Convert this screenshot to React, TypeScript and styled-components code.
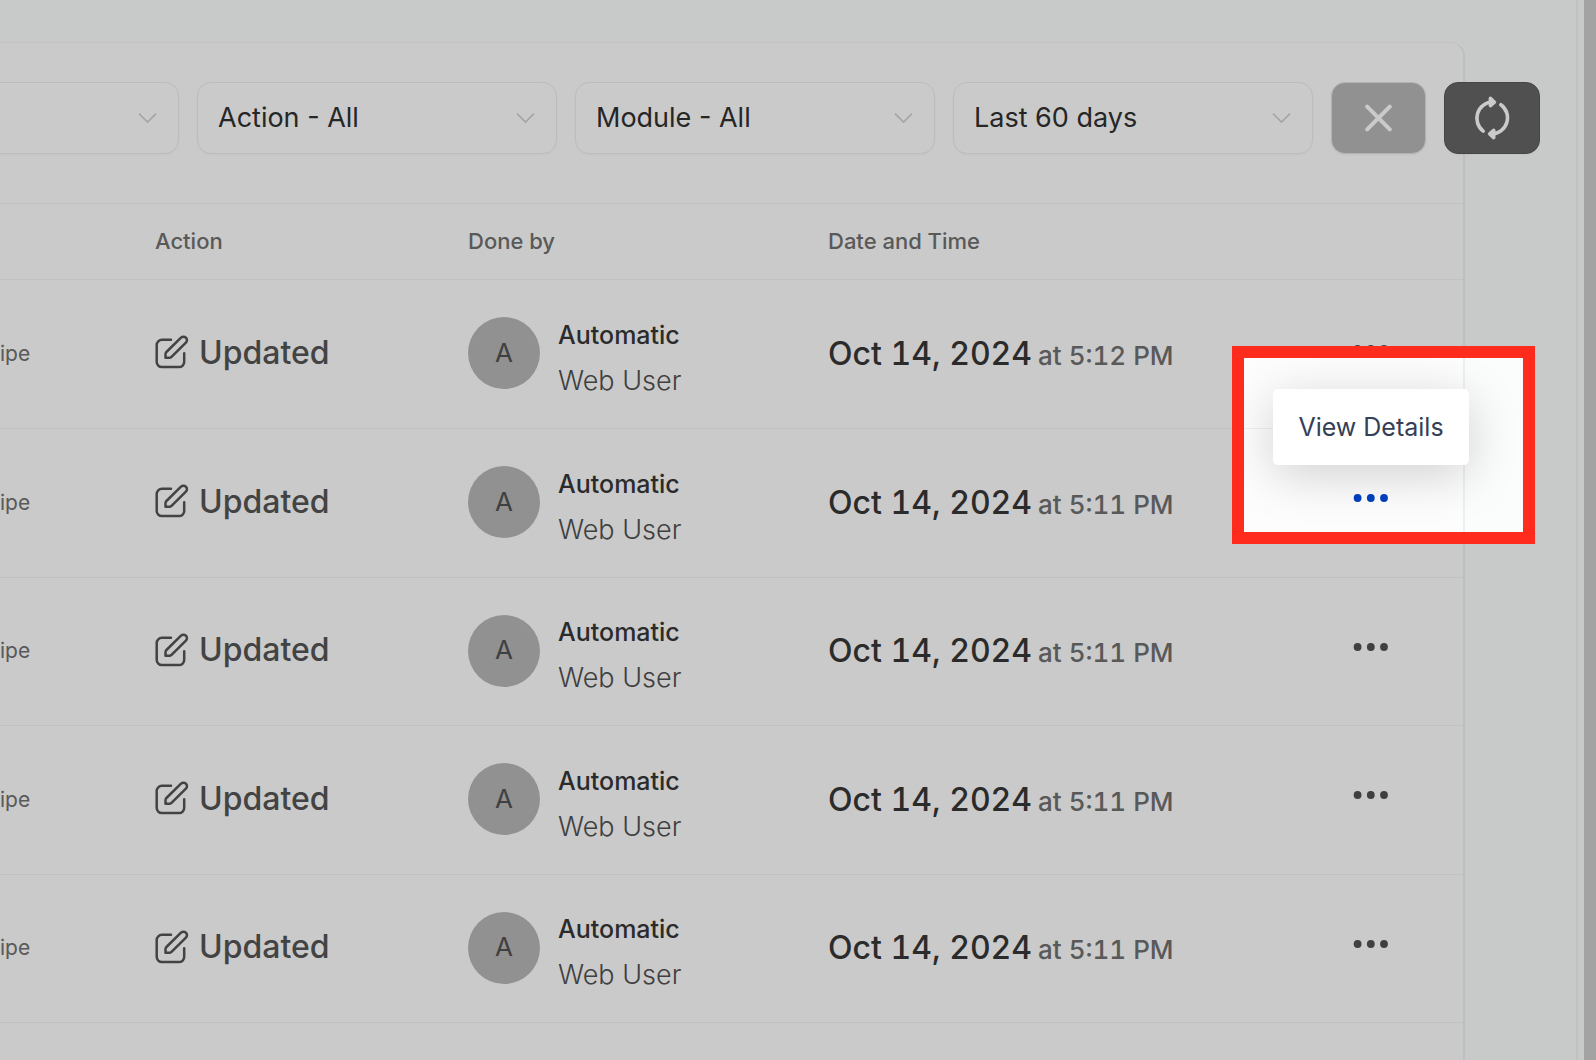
import React from "react";
import styled, { createGlobalStyle } from "styled-components";

const GlobalStyle = createGlobalStyle`
  *, *::before, *::after { box-sizing: border-box; }
  body {
    margin: 0;
    font-family: Inter, "Liberation Sans", sans-serif;
    background: #fcfcfc;
  }
  button, select { font: inherit; }
`;

const Page = styled.div`
  display: flex;
  position: relative;
  min-height: 100vh;
  overflow: hidden;
  background: #fbfcfc;
`;

const Main = styled.main`
  flex: 1;
  min-width: 0;
  display: flex;
  padding: 42px 111px 0 0;
`;

const Gutter = styled.div`
  width: 8px;
  border-left: 2px solid #f2f2f2;
`;

const ScrollTrack = styled.div`
  width: 12px;
  background: #cccccc;
`;

const Card = styled.section`
  flex: 1;
  min-width: 0;
  border-top: 1px solid #f3f3f3;
  border-right: 2px solid #eeeff1;
  border-top-right-radius: 14px;
  background: #fdfdfd;
`;

const Toolbar = styled.div`
  display: flex;
  gap: 18px;
  margin: 39px -77px 49px -181px;
`;

const SelectBox = styled.label`
  flex: 1 1 0;
  min-width: 0;
  display: grid;
  align-items: center;
  color: #303030;
`;

const Select = styled.select`
  grid-area: 1 / 1;
  appearance: none;
  width: 100%;
  height: 72px;
  padding: 0 60px 2px 20px;
  border: 1px solid #ececec;
  border-radius: 14px;
  background: #fdfdfd;
  box-shadow: 0 1px 2px rgba(0, 0, 0, 0.03);
  color: inherit;
  font-size: 27px;
`;

const Chevron = styled.svg`
  grid-area: 1 / 1;
  justify-self: end;
  margin-right: 22px;
  pointer-events: none;
`;

const ToolButton = styled.button<{ $dark?: boolean }>`
  flex: none;
  display: flex;
  align-items: center;
  justify-content: center;
  width: ${(p) => (p.$dark ? 96 : 95)}px;
  height: 72px;
  padding: 0;
  border: 1px solid ${(p) => (p.$dark ? "#585858" : "#e0e0e0")};
  border-radius: 14px;
  background: ${(p) => (p.$dark ? "#646464" : "#b6b6b6")};
  color: #fdfdfd;
  box-shadow: 0 1px 2px rgba(0, 0, 0, 0.04);
`;

const Table = styled.table`
  width: 100%;
  table-layout: fixed;
  border-collapse: separate;
  border-spacing: 0;
`;

const HeadCell = styled.th<{ $width?: number }>`
  width: ${(p) => (p.$width ? `${p.$width}px` : "auto")};
  height: 77px;
  padding: 0 0 2px;
  border-top: 1px solid #f3f3f3;
  border-bottom: 1px solid #f3f3f3;
  text-align: left;
  font-size: 22px;
  font-weight: 500;
  color: #707070;
`;

const Row = styled.tr`
  height: 149px;
  &:nth-child(3n), &:nth-child(5n) { height: 148px; }
`;

const Cell = styled.td<{ $center?: boolean }>`
  position: relative;
  padding: 0 0 2px;
  border-bottom: 1px solid #f0f0f0;
  text-align: ${(p) => (p.$center ? "center" : "left")};
  white-space: nowrap;
`;

const ModuleText = styled.span`
  font-size: 21px;
  color: #707070;
`;

const ActionLabel = styled.div`
  display: flex;
  align-items: center;
  gap: 10px;
  padding-bottom: 2px;
  font-size: 32px;
  font-weight: 500;
  color: #545454;
`;

const Person = styled.div`
  display: flex;
  align-items: center;
  gap: 18px;
`;

const Avatar = styled.span`
  display: flex;
  align-items: center;
  justify-content: center;
  width: 72px;
  height: 72px;
  padding-bottom: 2px;
  border-radius: 50%;
  background: #b6b6b6;
  color: #505050;
  font-size: 26px;
`;

const PersonText = styled.div`
  display: flex;
  flex-direction: column;
  padding-top: 9px;
  line-height: 45px;
`;

const PersonName = styled.span`
  font-size: 25px;
  font-weight: 500;
  color: #363636;
`;

const PersonRole = styled.span`
  font-size: 27px;
  font-weight: 300;
  color: #505050;
`;

const Timestamp = styled.div`
  display: flex;
  align-items: baseline;
  gap: 6px;
  font-variant-numeric: tabular-nums;
`;

const DateText = styled.span`
  font-size: 32px;
  font-weight: 500;
  color: #363636;
`;

const TimeText = styled.span`
  font-size: 26px;
  font-weight: 500;
  color: #707070;
`;

const MoreButton = styled.button<{ $active: boolean }>`
  display: inline-flex;
  align-items: center;
  justify-content: center;
  width: 60px;
  height: 40px;
  margin-bottom: 8px;
  padding: 0;
  border: 0;
  background: none;
  vertical-align: middle;
  color: ${(p) => (p.$active ? "#0040c0" : "#505050")};
`;

const Spotlight = styled.div`
  position: absolute;
  z-index: 2;
  top: -83px;
  left: -46px;
  width: 303px;
  height: 198px;
  padding: 31px 29px;
  border: 12px solid #ff2b1c;
  box-shadow: 0 0 0 3000px rgba(0, 0, 0, 0.2);
  overflow: hidden;
  pointer-events: none;
`;

const MenuItem = styled.button`
  display: block;
  width: 196px;
  height: 76px;
  padding: 0;
  border: 0;
  border-radius: 5px;
  background: #ffffff;
  box-shadow: 0 10px 50px rgba(0, 0, 0, 0.18);
  color: #344056;
  font-size: 25px;
  pointer-events: auto;
`;

const ChevronIcon = () => (
  <Chevron width="19" height="12" viewBox="0 0 19 12" fill="none" stroke="#cfcfcf" strokeWidth="1.7" strokeLinecap="round" aria-hidden="true">
    <path d="M1.5 2.2l8 7.8 8-7.8" />
  </Chevron>
);

const CloseIcon = () => (
  <svg width="28" height="28" viewBox="0 0 28 28" fill="none" stroke="currentColor" strokeWidth="4" strokeLinecap="round" aria-hidden="true">
    <path d="M2.2 2.7l22.6 22.6M24.8 2.7L2.2 25.3" />
  </svg>
);

const RefreshIcon = () => (
  <svg width="36" height="44" viewBox="0 0 36 44" fill="none" stroke="currentColor" strokeWidth="3.6" strokeLinecap="round" strokeLinejoin="round" aria-hidden="true">
    <path d="M9.2 35.1A16 16.2 0 0 1 18.2 6" />
    <path d="M26.9 8.7A16 16.2 0 0 1 18 38" />
    <path d="M16.4 2.4L20.4 6.2 16.4 9.6z" fill="currentColor" />
    <path d="M19.7 34.4L15.7 37.9 19.7 41.6z" fill="currentColor" />
  </svg>
);

const EditIcon = () => (
  <svg width="34" height="34" viewBox="0 0 34 34" fill="none" stroke="currentColor" strokeWidth="2.5" strokeLinecap="round" strokeLinejoin="round" aria-hidden="true">
    <path d="M16 4.8H7A5.2 5.2 0 0 0 1.7 10v16.8A5.2 5.2 0 0 0 7 32.1h17a5.2 5.2 0 0 0 5.2-5.3v-8.6" />
    <path d="M10.5 22.8v-3.6c0-.9.3-1.6.9-2.2L26 2.7a3.4 3.4 0 0 1 4.9 0 3.4 3.4 0 0 1 0 4.9L16.5 21.8c-.6.6-1.4 1-2.3 1z" />
  </svg>
);

const DotsIcon = () => (
  <svg width="36" height="10" viewBox="0 0 36 10" fill="currentColor" aria-hidden="true">
    <circle cx="4.6" cy="5" r="3.9" />
    <circle cx="17.8" cy="5" r="3.9" />
    <circle cx="31" cy="5" r="3.9" />
  </svg>
);

const filters = [
  { label: "User", value: "" },
  { label: "Action", value: "Action - All" },
  { label: "Module", value: "Module - All" },
  { label: "Period", value: "Last 60 days" },
];

const entries = [
  { id: 1, time: "5:12 PM" },
  { id: 2, time: "5:11 PM", open: true },
  { id: 3, time: "5:11 PM" },
  { id: 4, time: "5:11 PM" },
  { id: 5, time: "5:11 PM" },
];

export default function App() {
  return (
    <>
      <GlobalStyle />
      <Page>
        <Main>
          <Card>
            <Toolbar>
              {filters.map((f) => (
                <SelectBox key={f.label}>
                  <Select aria-label={f.label} defaultValue={f.value}>
                    <option value={f.value}>{f.value}</option>
                  </Select>
                  <ChevronIcon />
                </SelectBox>
              ))}
              <ToolButton type="button" aria-label="Clear filters">
                <CloseIcon />
              </ToolButton>
              <ToolButton type="button" aria-label="Refresh" $dark>
                <RefreshIcon />
              </ToolButton>
            </Toolbar>
            <Table>
              <thead>
                <tr>
                  <HeadCell $width={155} />
                  <HeadCell $width={313}>Action</HeadCell>
                  <HeadCell $width={360}>Done by</HeadCell>
                  <HeadCell>Date and Time</HeadCell>
                  <HeadCell $width={185} />
                </tr>
              </thead>
              <tbody>
                {entries.map((e) => (
                  <Row key={e.id}>
                    <Cell>
                      <ModuleText>ipe</ModuleText>
                    </Cell>
                    <Cell>
                      <ActionLabel>
                        <EditIcon />
                        Updated
                      </ActionLabel>
                    </Cell>
                    <Cell>
                      <Person>
                        <Avatar>A</Avatar>
                        <PersonText>
                          <PersonName>Automatic</PersonName>
                          <PersonRole>Web User</PersonRole>
                        </PersonText>
                      </Person>
                    </Cell>
                    <Cell>
                      <Timestamp>
                        <DateText>Oct 14, 2024</DateText>
                        <TimeText>at {e.time}</TimeText>
                      </Timestamp>
                    </Cell>
                    <Cell $center>
                      <MoreButton type="button" aria-label="More actions" $active={!!e.open}>
                        <DotsIcon />
                      </MoreButton>
                      {e.open && (
                        <Spotlight>
                          <MenuItem type="button">View Details</MenuItem>
                        </Spotlight>
                      )}
                    </Cell>
                  </Row>
                ))}
              </tbody>
            </Table>
          </Card>
        </Main>
        <Gutter />
        <ScrollTrack />
      </Page>
    </>
  );
}
